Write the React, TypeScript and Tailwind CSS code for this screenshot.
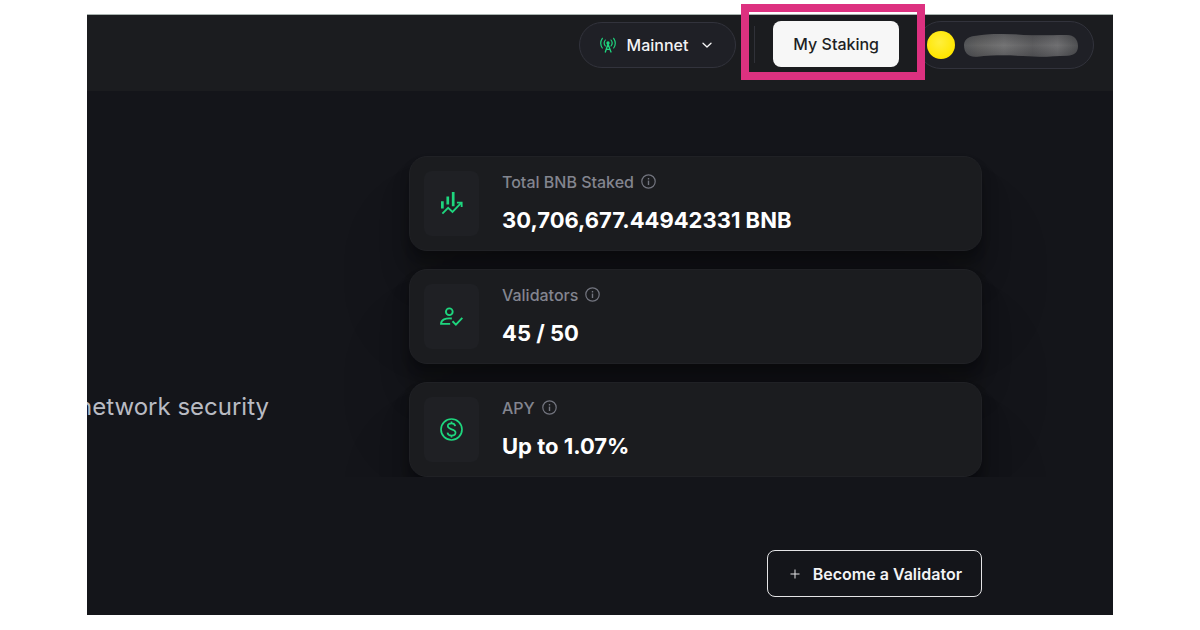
import type { ReactNode } from "react";

function BroadcastIcon() {
  return (
    <svg viewBox="111 114 48 48" className="size-4 shrink-0" fill="none" stroke="#1ed67e" strokeWidth="4" strokeLinecap="round" strokeLinejoin="round" aria-hidden="true">
      <circle cx="135" cy="132" r="5" fill="#1ed67e" stroke="none" />
      <path d="M135 135L127 159M135 135L144 159M130 151H141" />
      <path d="M127 123C123 128 123 136 127 141M144 123C148 128 148 136 144 141" strokeWidth="3.5" />
      <path d="M118 118C112 127 112 138 118 147M152 118C158 127 158 138 152 147" strokeWidth="3.5" />
    </svg>
  );
}

function ChevronIcon() {
  return (
    <svg viewBox="0 0 10 10" className="size-[10px] shrink-0" fill="none" stroke="#f7f7f8" strokeWidth="1.3" strokeLinecap="round" strokeLinejoin="round" aria-hidden="true">
      <path d="M1 3.2L5 7L9 3.2" />
    </svg>
  );
}

function InfoIcon() {
  return (
    <svg viewBox="0 0 15 15" className="size-[15px] shrink-0" fill="none" stroke="#73757f" strokeWidth="1.2" aria-hidden="true">
      <circle cx="7.5" cy="7.5" r="6.7" />
      <path d="M7.5 6.6V11" strokeWidth="1.4" />
      <path d="M7.5 4V5.5" strokeWidth="1.4" />
    </svg>
  );
}

function TrendIcon() {
  return (
    <svg viewBox="123 141 68 68" className="size-[23px]" fill="none" stroke="#1ed67e" strokeWidth="5.5" aria-hidden="true">
      <path d="M130 168V190M146 154V178M162 141V183" strokeWidth="8" />
      <path d="M130 205L147 188L160 200L185 174" />
      <path d="M173 172.500H187V185" />
    </svg>
  );
}

function UserCheckIcon() {
  return (
    <svg viewBox="120 136 68 68" className="size-[23px]" fill="none" stroke="#1ed67e" strokeWidth="5.5" aria-hidden="true">
      <circle cx="147.500" cy="156" r="10" />
      <path d="M155 176C136 174 123 179 123 192H150" />
      <path d="M157 184L167 194L186 174" />
    </svg>
  );
}

function DollarIcon() {
  return (
    <svg viewBox="122 131 68 68" className="size-[23px]" fill="none" stroke="#1ed67e" strokeWidth="5" aria-hidden="true">
      <circle cx="156" cy="165" r="31" />
      <path d="M167 155C166 150 162 147 156 147C150 147 145 150 145 155C145 167 168 162 168 174C168 179 163 183 156 183C149 183 145 179 144 174M156 141V147M156 183V189" />
    </svg>
  );
}

function AccountName() {
  return (
    <svg viewBox="162 98 342 69" className="h-[23px] w-[114px] shrink-0" role="img" aria-label="Hidden address">
      <defs>
        <linearGradient id="smudge" x1="0" x2="1" y1="0" y2="0">
          <stop offset="0" stopColor="#55575a" />
          <stop offset="0.12" stopColor="#636363" />
          <stop offset="0.35" stopColor="#747475" />
          <stop offset="0.6" stopColor="#5e5e60" />
          <stop offset="0.82" stopColor="#707072" />
          <stop offset="1" stopColor="#505153" />
        </linearGradient>
        <linearGradient id="shade" x1="0" x2="0" y1="0" y2="1">
          <stop offset="0" stopColor="#1f2026" stopOpacity="0.3" />
          <stop offset="0.5" stopColor="#1f2026" stopOpacity="0" />
          <stop offset="1" stopColor="#1f2026" stopOpacity="0.3" />
        </linearGradient>
      </defs>
      <path d="M162 130C163 112 178 105 200 103C235 97 290 97 340 101C390 103 430 101 470 101C492 101 504 115 504 134C504 154 492 163 470 163C430 164 400 168 360 165C310 162 260 160 200 166C175 167 162 155 162 130Z" fill="url(#smudge)" />
      <path d="M162 130C163 112 178 105 200 103C235 97 290 97 340 101C390 103 430 101 470 101C492 101 504 115 504 134C504 154 492 163 470 163C430 164 400 168 360 165C310 162 260 160 200 166C175 167 162 155 162 130Z" fill="url(#shade)" />
    </svg>
  );
}

function StatCard({ icon, label, value }: { icon: ReactNode; label: string; value: string }) {
  return (
    <article className="flex items-center gap-[23px] rounded-[18px] border border-[#202125] bg-[#1b1c1f] p-[14px] shadow-[0_70px_80px_rgba(0,0,0,0.12),0_32px_33px_rgba(0,0,0,0.14),0_16px_18px_rgba(0,0,0,0.18),0_6px_10px_rgba(0,0,0,0.16)]">
      <div className="flex h-[65px] w-[55px] shrink-0 items-center justify-center rounded-lg bg-[#1f2024]">{icon}</div>
      <div className="pb-[2px]">
        <h2 className="flex items-center gap-[7px] text-base leading-5 font-medium text-[#83858f]">
          {label}
          <InfoIcon />
        </h2>
        <p className="mt-[14px] text-[22px] leading-7 font-bold text-white">{value}</p>
      </div>
    </article>
  );
}

export default function App() {
  return (
    <div className="min-h-screen bg-white px-[87px] pt-[14px] pb-[15px] font-['Inter',sans-serif]">
      <div className="bg-[#14151a]">
        <header className="flex h-[77px] items-start justify-end border-t border-[#a9b3af] bg-[#1b1c1f] pt-[6px] pr-[19px]">
          <button type="button" className="mt-px flex h-[46px] items-center rounded-full border border-[#32333c] bg-[#1f2026] pr-[23px] pl-5 text-base font-medium text-[#f3f3f5]">
            <BroadcastIcon />
            <span className="mr-[14px] ml-[11px]">Mainnet</span>
            <ChevronIcon />
          </button>
          <div className="mt-[5px] ml-[18px] h-[37px] w-px bg-[#303138]" />
          <div className="relative ml-[18px]">
            <button type="button" className="h-[46px] rounded-lg bg-[#f7f7f7] px-5 text-base font-medium text-[#1d1f24]">
              My Staking
            </button>
            <div className="pointer-events-none absolute -top-[17px] -right-[26px] -bottom-[13px] -left-[32px] z-10 border-8 border-[#dd3180]" />
          </div>
          <button type="button" className="ml-[18px] flex h-[48px] items-center gap-[9px] rounded-full border border-[#32333c] bg-[#1f2026] pr-[15px] pl-[9px]">
            <span className="size-7 shrink-0 rounded-full bg-[radial-gradient(circle_at_45%_40%,#ffef3c,#ffe600_70%)]" />
            <AccountName />
          </button>
        </header>
        <main>
          <section className="flex justify-between overflow-hidden pt-[65px] pr-[131px]">
            <div className="flex w-[182px] shrink-0 items-end justify-end overflow-hidden pb-[54px]">
              <p className="text-2xl leading-8 whitespace-nowrap text-[#b9bbc3]">network security</p>
            </div>
            <div className="flex max-w-[573px] flex-1 flex-col gap-[18px]">
              <StatCard icon={<TrendIcon />} label="Total BNB Staked" value="30,706,677.44942331 BNB" />
              <StatCard icon={<UserCheckIcon />} label="Validators" value="45 / 50" />
              <StatCard icon={<DollarIcon />} label="APY" value="Up to 1.07%" />
            </div>
          </section>
          <div className="flex justify-end pt-[73px] pr-[131px] pb-[18px]">
            <button type="button" className="flex h-[47px] items-center gap-[10px] rounded-lg border border-[#e4e4e6] px-[19px] text-base font-semibold text-[#f3f3f5]">
              <svg viewBox="0 0 16 16" className="size-4" stroke="#e4e4e6" strokeWidth="1" aria-hidden="true">
                <path d="M8 3.500V12.500M3.500 8H12.500" />
              </svg>
              Become a Validator
            </button>
          </div>
        </main>
      </div>
    </div>
  );
}
